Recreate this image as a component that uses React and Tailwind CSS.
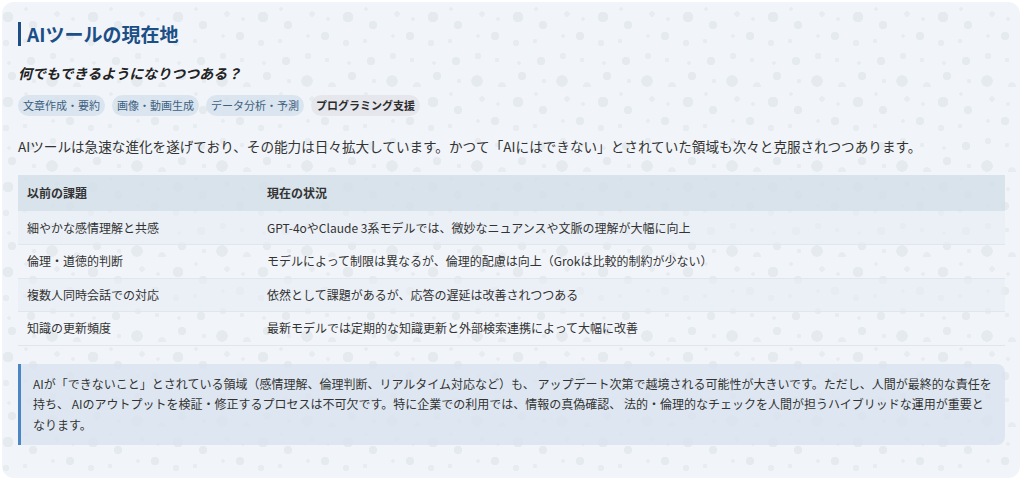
import React from "react";

const rows = [
  ["細やかな感情理解と共感", "GPT-4oやClaude 3系モデルでは、微妙なニュアンスや文脈の理解が大幅に向上"],
  ["倫理・道徳的判断", "モデルによって制限は異なるが、倫理的配慮は向上（Grokは比較的制約が少ない）"],
  ["複数人同時会話での対応", "依然として課題があるが、応答の遅延は改善されつつある"],
  ["知識の更新頻度", "最新モデルでは定期的な知識更新と外部検索連携によって大幅に改善"],
];

const tags = ["文章作成・要約", "画像・動画生成", "データ分析・予測"];

const App = () => {
  return (
    <div className="w-[1024px] h-[483px] bg-white p-[2px] font-['Noto_Sans_CJK_JP','Noto_Sans',sans-serif]">
      {/* CARD WITH DOT PATTERN */}
      <div className="h-[476px] w-[1018px] rounded-[12px] bg-[#f1f5f9] bg-[image:radial-gradient(circle_at_7px_15px,#e5eaef_5px,transparent_5.5px),radial-gradient(circle_at_32px_23px,#e5eaef_4px,transparent_4.5px),radial-gradient(circle_at_25px_7px,#e7ecf1_1.5px,transparent_2px),radial-gradient(circle_at_56px_12px,#e7ecf1_2.5px,transparent_3px),radial-gradient(circle_at_72px_17px,#e7ecf1_1.5px,transparent_2px),radial-gradient(circle_at_69px_34px,#e5eaef_4px,transparent_4.5px),radial-gradient(circle_at_52px_34px,#e7ecf1_1.5px,transparent_2px),radial-gradient(circle_at_5px_41px,#e7ecf1_3px,transparent_3.5px),radial-gradient(circle_at_24px_39px,#e7ecf1_2px,transparent_2.5px),radial-gradient(circle_at_30px_59px,#e5eaef_4px,transparent_4.5px),radial-gradient(circle_at_52px_54px,#e7ecf1_3px,transparent_3.5px),radial-gradient(circle_at_71px_58px,#e7ecf1_2px,transparent_2.5px),radial-gradient(circle_at_8px_61px,#e7ecf1_1.5px,transparent_2px),radial-gradient(circle_at_11px_74px,#e5eaef_4px,transparent_4.5px),radial-gradient(circle_at_33px_79px,#e7ecf1_2px,transparent_2.5px),radial-gradient(circle_at_51px_79px,#e5eaef_5.5px,transparent_6px),radial-gradient(circle_at_76px_84px,#e7ecf1_3.5px,transparent_4px)] bg-[length:85px_85px] bg-[position:-1px_0px] px-4 pt-[20px]">
        {/* TITLE */}
        <h2 className="border-l-[3px] border-[#1d4f87] pl-[6px] text-[19px] leading-[24px] font-bold text-[#1d4f87]">
          AIツールの現在地
        </h2>

        {/* SUBTITLE */}
        <p className="mt-[17px] text-[14px] leading-[20px] font-bold italic text-[#222]">
          何でもできるようになりつつある？
        </p>

        {/* TAGS */}
        <div className="mt-[12px] flex gap-[7px]">
          {tags.map((t) => (
            <span key={t} className="h-[21px] rounded-full bg-[#d5e1ec]/80 px-[5px] text-[11px] leading-[21px] text-[#3d5f80]">
              {t}
            </span>
          ))}
          <span className="h-[21px] rounded-full bg-[#e3e6ea]/90 px-[5px] text-[11px] leading-[21px] font-bold text-[#2c2c2c]">
            プログラミング支援
          </span>
        </div>

        {/* PARAGRAPH */}
        <p className="mt-[19px] text-[13.6px] leading-[22px] text-[#333]">
          AIツールは急速な進化を遂げており、その能力は日々拡大しています。かつて「AIにはできない」とされていた領域も次々と克服されつつあります。
        </p>

        {/* TABLE */}
        <table className="mt-[18px] w-[987px] border-collapse text-[12px] text-[#333]">
          <thead>
            <tr className="h-[36px] bg-[#d3dfe9]/80">
              <th className="w-[240px] pl-[9px] text-left font-bold">以前の課題</th>
              <th className="pl-[9px] text-left font-bold">現在の状況</th>
            </tr>
          </thead>
          <tbody>
            {rows.map((r, i) => (
              <tr
                key={r[0]}
                className={
                  i % 2 === 0
                    ? "h-[33.5px] border-b border-[#dfe6ed] bg-[#e8edf3]/60"
                    : "h-[33.5px] border-b border-[#dfe6ed]"
                }
              >
                <td className="pl-[9px]">{r[0]}</td>
                <td className="pl-[9px]">{r[1]}</td>
              </tr>
            ))}
          </tbody>
        </table>

        {/* CALLOUT */}
        <div className="mt-[18px] w-[987px] rounded-r-[8px] border-l-[3px] border-[#4a86c4] bg-[#d9e4ef]/80 pl-[12px] pr-[10px] pt-[10px] pb-[10px] text-[12px] leading-[20.5px] text-[#333]">
          AIが「できないこと」とされている領域（感情理解、倫理判断、リアルタイム対応など）も、 アップデート次第で越境される可能性が大きいです。ただし、人間が最終的な責任を持ち、 AIのアウトプットを検証・修正するプロセスは不可欠です。特に企業での利用では、情報の真偽確認、 法的・倫理的なチェックを人間が担うハイブリッドな運用が重要となります。
        </div>
      </div>
    </div>
  );
};

export default App;
